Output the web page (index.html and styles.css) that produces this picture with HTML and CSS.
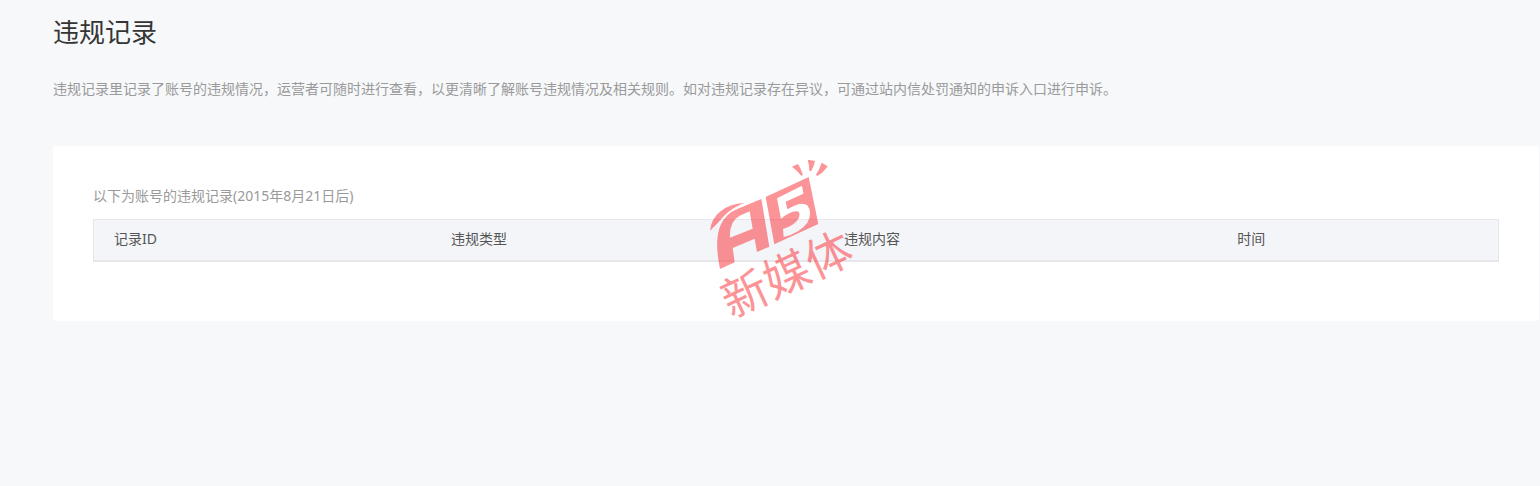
FILE: index.html
```html
<!DOCTYPE html>
<html lang="zh-CN">
<head>
<meta charset="utf-8">
<title>违规记录</title>
<link rel="stylesheet" href="styles.css">
</head>
<body>
<main class="page">
  <header class="page-header">
    <h1 class="page-title">违规记录</h1>
    <p class="page-desc">违规记录里记录了账号的违规情况，运营者可随时进行查看，以更清晰了解账号违规情况及相关规则。如对违规记录存在异议，可通过站内信处罚通知的申诉入口进行申诉。</p>
  </header>
  <section class="card">
    <table class="records">
      <caption class="records-caption">以下为账号的违规记录(2015年8月21日后)</caption>
      <thead>
        <tr>
          <th class="col-id" scope="col">记录ID</th>
          <th class="col-type" scope="col">违规类型</th>
          <th class="col-content" scope="col">违规内容</th>
          <th class="col-time" scope="col">时间</th>
        </tr>
      </thead>
    </table>
  </section>
</main>
<svg class="watermark" width="170" height="180" viewBox="0 0 510 540" role="img" aria-label="A5新媒体">
  <!-- rays -->
  <path d="M276 50L294 42Q304 58 309 75L304 77Q292 62 276 50ZM323 29L345 33Q342 48 334 63L328 62Q328 45 323 29ZM365 38L383 49Q370 68 352 78L348 74Q359 58 365 38Z"/>
  <!-- emblem -->
  <path d="M30 242Q34 205 60 185Q88 161 134 159Q100 170 72 198Q50 224 30 242Z"/>
  <path fill-rule="evenodd" d="M60 357Q42 270 62 225Q78 190 112 177L184 147L208 290L171 306L164 266L98 294L104 337ZM90 263L158 236L149 184L119 197Q87 215 90 263Z"/>
  <path fill-rule="evenodd" d="M197 141L326 81L355 222L223 283ZM231 145L306 107L310 131L257 155L262 178Q304 152 322 166Q339 188 322 218Q301 248 251 261L249 237Q282 227 295 207Q304 185 290 184Q268 184 243 207Z"/>
  <text class="watermark-name" x="94" y="506" transform="rotate(-25 94 506)">新媒体</text>
</svg>
</body>
</html>
```
FILE: styles.css
```css
body {
  margin: 0;
  position: relative;
  min-height: 100vh;
  background: #f6f8fa;
  color: #353535;
  font: 14px/22px "Noto Sans", "Noto Sans CJK SC", sans-serif;
}

.page {
  padding: 13px 1px 40px 53px;
}

.page-header {
  margin-bottom: 46px;
}

.page-title {
  margin: 0 0 27px;
  font-size: 26px;
  line-height: 38px;
  font-weight: 400;
}

.page-desc {
  margin: 0;
  color: #9a9a9a;
}

.card {
  padding: 39px 40px 59px;
  background: #fff;
  border-radius: 4px;
}

.records {
  width: 100%;
  border-collapse: separate;
  border-spacing: 0;
  border: 1px solid #e7e7eb;
  border-bottom-width: 2px;
  background: #f4f5f9;
  table-layout: fixed;
}

.records-caption {
  padding-bottom: 12px;
  color: #9a9a9a;
  text-align: left;
}

.records th {
  box-sizing: border-box;
  padding: 8px 20px 10px;
  color: #555;
  text-align: left;
  font-weight: 400;
}

.col-type,
.col-content {
  width: 28%;
}

.col-time {
  width: 20%;
}

.watermark {
  position: absolute;
  top: 150px;
  left: calc(50% - 70px);
  fill: #fa2a32;
  opacity: 0.5;
  pointer-events: none;
}

.watermark-name {
  font-family: "Noto Sans CJK SC", sans-serif;
  font-size: 138px;
  font-weight: 400;
}
```
